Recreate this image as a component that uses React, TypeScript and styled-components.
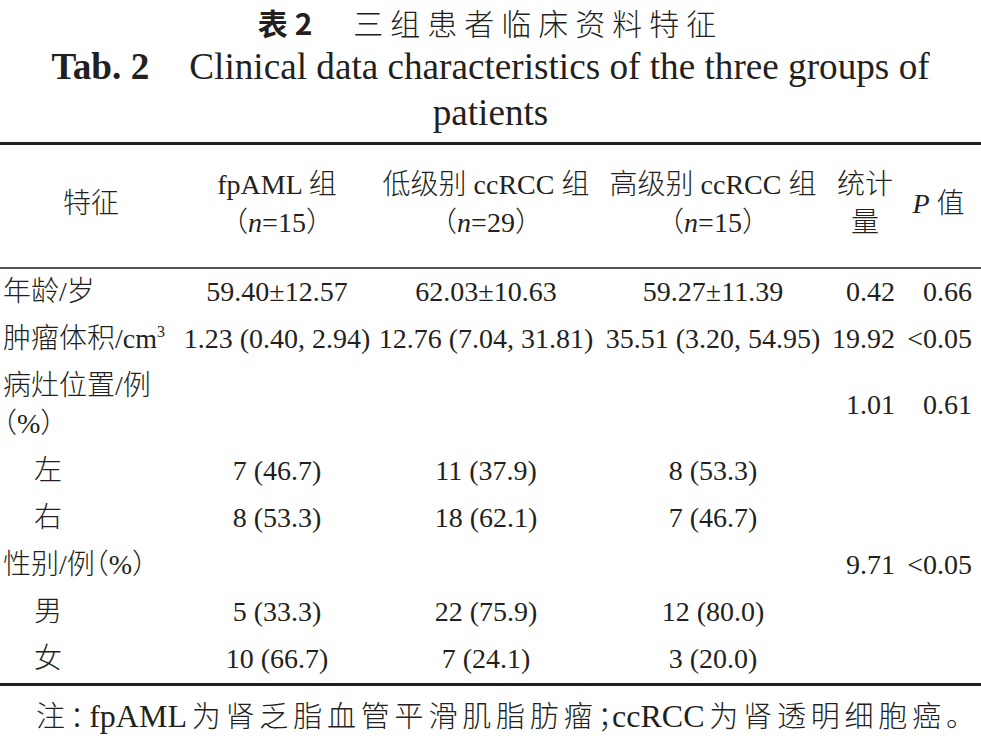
import React from "react";
import styled, { createGlobalStyle } from "styled-components";

const ink = "#231f20";
const serifStack = `"Liberation Serif", "Times New Roman", "Noto Sans CJK SC", serif`;

const GlobalStyle = createGlobalStyle`
  html, body { margin: 0; padding: 0; background: #ffffff; }
  body { font-family: ${serifStack}; color: ${ink}; }
`;

const Page = styled.div`
  width: 981px;
`;

const TitleCn = styled.div`
  font-family: "Noto Sans CJK SC", sans-serif;
  font-size: 30px;
  line-height: 44px;
  letter-spacing: 7px;
  text-align: center;
  font-weight: 300;
`;

const TitleLabel = styled.span`
  font-weight: 700;
`;

const TitleText = styled.span`
  margin-left: 34px;
`;

const TitleEn = styled.div`
  font-size: 37.2px;
  line-height: 46px;
  text-align: center;
`;

const EnLabel = styled.b`
  margin-right: 40px;
`;

const Table = styled.table`
  width: 981px;
  table-layout: fixed;
  border-collapse: separate;
  border-spacing: 0;
  margin-top: 6px;
  font-size: 28px;
  line-height: 38px;
  font-weight: 300;
`;

const Col = styled.col<{ $w: number }>`
  width: ${(p) => p.$w}px;
`;

const Th = styled.th<{ $pr?: number }>`
  font-weight: 300;
  text-align: center;
  vertical-align: middle;
  padding: 21px ${(p) => p.$pr ?? 0}px 25px 0;
  border-top: 3px solid ${ink};
  border-bottom: 2px solid #555;
`;

type Kind = "label" | "sub" | "center" | "right";

const Td = styled.td<{ $kind: Kind; $last?: boolean }>`
  padding-top: 4px;
  padding-bottom: 5px;
  padding-left: ${(p) => (p.$kind === "label" ? 3 : p.$kind === "sub" ? 34 : 0)}px;
  padding-right: ${(p) => (p.$kind === "right" ? 9 : 0)}px;
  text-align: ${(p) => (p.$kind === "center" ? "center" : p.$kind === "right" ? "right" : "left")};
  vertical-align: middle;
  white-space: nowrap;
  border-bottom: ${(p) => (p.$last ? `3px solid ${ink}` : "none")};
`;

const Sup = styled.sup`
  font-size: 16px;
  line-height: 0;
  vertical-align: 11px;
`;

const Ital = styled.i`
  font-style: italic;
`;

const Half = styled.span`
  font-feature-settings: "halt";
`;

const Note = styled.p`
  margin: 10px 6px 0 36px;
  font-size: 29px;
  line-height: 40px;
  font-weight: 300;
  text-align: justify;
  text-align-last: justify;
`;

const NoteLatin = styled.span`
  font-size: 32px;
`;

type Row = {
  label: React.ReactNode;
  sub?: boolean;
  a?: string;
  b?: string;
  c?: string;
  s?: string;
  p?: string;
};

const rows: Row[] = [
  { label: "年龄/岁", a: "59.40±12.57", b: "62.03±10.63", c: "59.27±11.39", s: "0.42", p: "0.66" },
  {
    label: (
      <>
        肿瘤体积/cm<Sup>3</Sup>
      </>
    ),
    a: "1.23 (0.40, 2.94)",
    b: "12.76 (7.04, 31.81)",
    c: "35.51 (3.20, 54.95)",
    s: "19.92",
    p: "<0.05",
  },
  {
    label: (
      <>
        病灶位置/例
        <br />
        <Half>（%）</Half>
      </>
    ),
    s: "1.01",
    p: "0.61",
  },
  { label: "左", sub: true, a: "7 (46.7)", b: "11 (37.9)", c: "8 (53.3)" },
  { label: "右", sub: true, a: "8 (53.3)", b: "18 (62.1)", c: "7 (46.7)" },
  {
    label: (
      <>
        性别/例<Half>（%）</Half>
      </>
    ),
    s: "9.71",
    p: "<0.05",
  },
  { label: "男", sub: true, a: "5 (33.3)", b: "22 (75.9)", c: "12 (80.0)" },
  { label: "女", sub: true, a: "10 (66.7)", b: "7 (24.1)", c: "3 (20.0)" },
];

export default function App() {
  return (
    <Page>
      <GlobalStyle />
      <TitleCn lang="zh">
        <TitleLabel>表2</TitleLabel>
        <TitleText>三组患者临床资料特征</TitleText>
      </TitleCn>
      <TitleEn>
        <EnLabel>Tab. 2</EnLabel>Clinical data characteristics of the three groups of
        <br />
        patients
      </TitleEn>
      <Table lang="zh">
        <colgroup>
          <Col $w={182} />
          <Col $w={190} />
          <Col $w={228} />
          <Col $w={226} />
          <Col $w={78} />
          <Col $w={77} />
        </colgroup>
        <thead>
          <tr>
            <Th>特征</Th>
            <Th>
              fpAML 组
              <br />
              （<Ital>n</Ital>=15）
            </Th>
            <Th>
              低级别 ccRCC 组
              <br />
              （<Ital>n</Ital>=29）
            </Th>
            <Th>
              高级别 ccRCC 组
              <br />
              （<Ital>n</Ital>=15）
            </Th>
            <Th>
              统计
              <br />
              量
            </Th>
            <Th $pr={8}>
              <Ital>P</Ital> 值
            </Th>
          </tr>
        </thead>
        <tbody>
          {rows.map((r, i) => {
            const last = i === rows.length - 1;
            return (
              <tr key={i}>
                <Td $kind={r.sub ? "sub" : "label"} $last={last}>
                  {r.label}
                </Td>
                <Td $kind="center" $last={last}>{r.a}</Td>
                <Td $kind="center" $last={last}>{r.b}</Td>
                <Td $kind="center" $last={last}>{r.c}</Td>
                <Td $kind="right" $last={last}>{r.s}</Td>
                <Td $kind="right" $last={last}>{r.p}</Td>
              </tr>
            );
          })}
        </tbody>
      </Table>
      <Note lang="zh">
        注<Half>：</Half>
        <NoteLatin>fpAML</NoteLatin>为肾乏脂血管平滑肌脂肪瘤<Half>；</Half>
        <NoteLatin>ccRCC</NoteLatin>为肾透明细胞癌。
      </Note>
    </Page>
  );
}
